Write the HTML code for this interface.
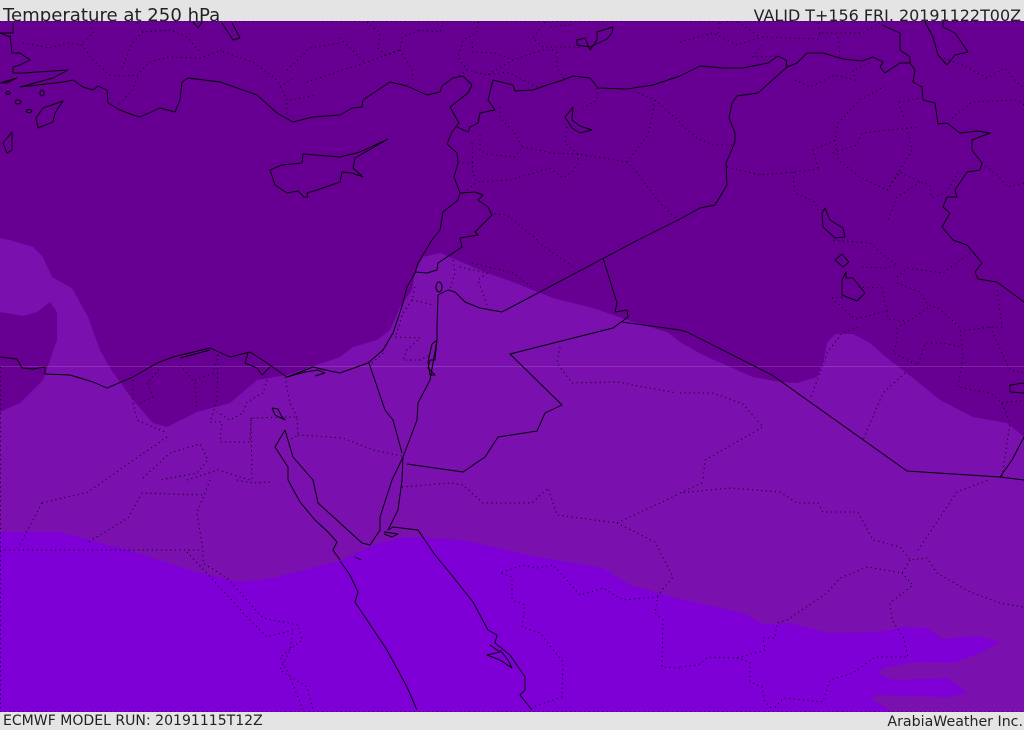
<!DOCTYPE html>
<html><head><meta charset="utf-8"><title>Temperature at 250 hPa</title>
<style>
html,body{margin:0;padding:0;background:#e4e4e4;width:1024px;height:729px;overflow:hidden}
.t{position:absolute;font-family:"DejaVu Sans",sans-serif;color:#222;white-space:nowrap;line-height:1}
svg{position:absolute;left:0;top:21px}
</style></head><body>
<div class="t" style="left:3px;top:7px;font-size:18.1px">Temperature at 250 hPa</div>
<div class="t" style="right:3px;top:8px;font-size:15.95px">VALID T+156 FRI. 20191122T00Z</div>
<div class="t" style="left:3px;top:714px;font-size:14.05px">ECMWF MODEL RUN: 20191115T12Z</div>
<div class="t" style="right:1px;top:715px;font-size:14.2px">ArabiaWeather Inc.</div>
<svg width="1024" height="691" viewBox="0 21 1024 691">
<rect x="0" y="21" width="1024" height="691" fill="#670092"/>
<path fill="#7a10ae" stroke-linejoin="round" d="M0 238L10 240L33 247L43 257L52 277L72 288L88 317L100 350L110 368L133 400L153 423L167 427L197 412L230 403L257 380L287 375L340 357L353 347L377 340L390 330L400 307L412 290L415 273L423 257L440 253L457 260L487 273L513 282L553 298L593 308L633 322L667 332L680 342L703 355L730 367L753 377L780 382L797 383L817 377L823 363L827 343L835 334L853 334L870 343L887 358L913 378L940 400L973 417L1007 423L1024 437L1024 712L0 712Z"/>
<path fill="#670092" d="M0 312L23 316L37 312L50 302L57 312L57 340L43 380L20 403L0 412Z"/>
<path fill="#7f00d6" d="M0 532L60 532L127 550L200 573L240 582L273 578L340 561L373 545L403 537L427 538L463 540L527 555L603 568L630 585L680 599L743 613L763 624L790 623L827 633L880 632L903 627L927 628L943 639L980 636L1000 642L980 653L953 663L917 662L887 667L877 673L893 680L947 678L968 693L947 697L877 695L870 698L893 712L0 712Z"/>
<path d="M0 366.5H1024" stroke="#fff" stroke-opacity=".14" stroke-width="1"/>
<g fill="none" stroke="#000" stroke-width=".95" stroke-linejoin="round">
<path d="M10 35L12 53L20 53L30 60L20 65L13 67L13 73L23 73L68 70L53 78L20 87L55 83L63 82L73 80L83 87L93 90L98 86L107 90L108 103L120 110L133 115L140 117L160 108L175 112L180 100L182 82L188 78L220 82L257 95L277 113L293 122L313 117L340 115L352 108L362 107L363 100L390 82L407 86L427 95L440 92L442 86L453 78L463 76L472 85L468 93L450 107L459 123L452 132L447 144L457 153L458 163L454 177L460 193L458 200L443 212L440 230L432 240L418 263L415 273L407 287L403 303L393 333L383 350L368 363L340 373L330 371L313 367L287 377L267 363L250 352L230 357L210 348L173 357L157 363L133 377L107 388L93 382L70 375L45 374L45 367L33 369L22 368L17 359L0 357"/>
<path d="M248 353L245 363L257 368L262 375L270 367M180 358L195 354L210 350M287 377L305 372L318 370L325 373L315 376"/>
<path d="M13 23L13 33L0 33M0 33L10 37"/>
<path d="M285 430L275 447L288 467L288 480L300 502L315 520L328 532L337 542L333 550L340 560M285 430L293 457L313 480L318 503L340 523L362 543L370 545L380 530L380 517L392 480L403 457M403 457L402 480L398 510L388 530L393 527L418 530L435 555L450 573L473 602L488 630L497 635L495 643L510 655L525 677L525 690L520 695L532 710"/>
<path d="M340 561L350 575L358 592L355 602L387 650L407 687L417 710"/>
<path d="M490 645L500 652L487 655L500 660L512 668L508 660L500 650M384 534L392 537L398 534L384 532M355 557L361 560"/>
<path d="M369 363L385 410L393 420L402 453M403 457L417 420L418 403L430 380L437 340L437 327L438 295"/>
<path d="M432 344L437 340L435 360L430 360L428 368L435 375L430 375L428 362Z"/>
<ellipse cx="439" cy="287" rx="3" ry="5"/>
<path d="M407 464L463 472L485 457L498 437L537 431L545 413L562 405L510 354L613 328L628 317L627 310L615 312L617 303L603 258"/>
<path d="M502 312L638 240L680 219L700 208L715 205L727 185L726 163L735 142L735 133L729 118L732 103L737 96L758 93L787 67"/>
<path d="M502 312L480 308L465 302L455 292L448 290L438 295"/>
<path d="M457 127L468 132L470 127L478 123L480 113L495 110L488 100L493 80L513 85L515 91L533 90L547 85L563 80L573 76L590 78L598 88L627 89L653 85L680 76L700 66L723 68L743 68L768 63L778 56L786 60L787 67L797 63L807 53L823 53L843 59L862 61L873 57L883 62L880 67L885 73L900 63L910 63L910 57L900 50L900 33L882 25"/>
<path d="M910 63L915 70L913 82L922 87L923 100L935 103L938 124L947 123L960 133L977 131L990 133L972 140L972 150L982 163L980 170L967 172L955 190L957 197L947 197L943 207L950 213L942 227L953 240L967 245L982 263L975 272L978 279L997 282L1024 302"/>
<path d="M460 193L475 192L483 195L478 200L488 207L492 215L475 232L478 235L460 238L462 247L438 263L437 270L427 273L415 272"/>
<path d="M622 322L680 330L687 332L772 375L907 471L1000 477L1024 480M1000 477L1012 460L1024 437"/>
<path d="M270 170L282 165L302 163L303 154L340 157L360 152L388 139L355 158L353 168L363 177L352 173L342 172L340 182L317 190L307 193L308 197L304 197L298 191L287 193L275 185Z"/>
<path d="M63 101L43 108L36 118L38 128L53 122L55 113ZM12 132L3 143L7 153L12 150ZM222 23L233 40L240 38L232 23M193 22L198 28L202 22M0 83L17 78L7 83Z"/>
<ellipse cx="8" cy="93" rx="2" ry="1.5"/><ellipse cx="18" cy="102" rx="3" ry="2"/><ellipse cx="29" cy="111" rx="3" ry="1.5"/><ellipse cx="42" cy="93" rx="2" ry="3"/>
<path d="M577 40L585 38L590 50L597 40L597 32L613 27L612 33L607 39L590 47L577 45ZM573 107L565 117L572 128L580 133L592 130L580 126L572 120L573 107Z"/>
<path d="M925 22L933 37L938 55L947 65L955 55L968 52L955 33L943 27L943 22"/>
<path d="M825 208L822 213L823 227L835 238L845 237L843 228L830 220ZM835 260L842 254L849 262L843 267ZM846 272L842 280L842 295L857 301L865 293L853 278L846 278ZM1010 385L1024 383M1010 392L1024 393M1010 385L1010 392"/>
<path d="M272 408L278 409L282 417L285 420L275 415Z"/>
</g>
<g fill="none" stroke="#000" stroke-width="1" stroke-dasharray="1 3.6">
<path d="M0 21H1024M0 712H1024M.5 367V712"/>
<path d="M23 43L50 48L67 43L82 45L93 60L110 75L117 76L138 75L148 63L167 57L200 58L222 50M90 23L93 33L80 45M137 23L143 32L170 30L187 37L200 52M143 32L132 43L122 68M138 77L132 90L117 107M223 52L253 62L277 80L287 100L287 117M287 70L310 48L340 43M280 87L293 78M307 82L340 71L365 63L400 50L402 37L420 30L440 32L443 22M290 100L317 95M367 22L380 33L378 48L385 55L400 50M340 38L365 63M400 50L412 70L413 83"/>
<path d="M478 22L477 33L463 40L458 57L467 70L457 77M467 70L487 75L507 72L537 87M472 42L473 52L495 53L513 60L543 50L557 50M513 60L487 75M545 22L533 38L543 47L580 47M557 52L557 68L565 80M570 25L547 27M597 88L597 100L583 108M638 93L655 100L680 122M655 100L648 135L627 162"/>
<path d="M500 107L500 118L515 133L522 147L515 157L487 154L480 150L480 135M522 147L553 153L578 154L627 162L637 173L660 203L680 222M578 154L578 163L572 172L563 178L550 168L510 180L477 182L467 190M472 143L473 173L477 182M458 163L473 163M567 127L565 143L578 154"/>
<path d="M682 125L697 138L713 145L733 145M727 167L760 175L793 172L820 169M793 172L795 193L815 202L818 210M680 42L713 33L737 45L762 37L818 39L820 33L862 33L880 23M720 23L718 33M738 22L760 37M762 45L753 57L778 56M818 23L820 33M838 37L840 57M795 80L810 87L835 75L855 80L853 70L873 62"/>
<path d="M885 86L860 100L838 123L835 140L813 150L818 168M835 140L838 160L860 177L887 190L900 172L920 182L930 185L932 198L947 192L958 172M833 153L857 145L862 133L907 128L920 127M907 128L912 150L887 190M899 102L920 98M900 107L905 120M952 118L972 102L1017 100L1024 105M982 163L997 175L1008 187L1024 183M920 182L897 197L887 223M940 57L963 65L987 78L1005 68L1015 80L1024 88"/>
<path d="M832 298L847 297M832 298L855 319L887 311L882 288L857 287M887 311L888 319L907 321M862 267L887 268L897 265L883 255L870 243L830 240M897 277L907 268L943 273L970 253M897 283L920 292L928 305L940 309L960 328L963 357L958 387L990 393L1002 403L1010 423L1002 477M928 308L910 320L897 328L897 343L893 353L918 365L925 343L943 343L962 347M960 331L990 327L1002 327L997 290M990 327L1010 370L1024 373M1002 403L1024 400M858 327L842 333L827 353L810 400M905 373L883 393L863 440"/>
<path d="M680 393L713 393L743 404L763 427L705 460L703 480M560 347L557 363L572 383L617 382L677 393"/>
<path d="M702 483L680 493L730 488L780 492L797 503L818 503L823 512L858 512L873 540L900 547L910 560L927 558L937 573L970 592L1000 603L1023 607M918 550L957 492L988 480M910 560L902 573L867 567L840 578L827 593L787 620L777 623L775 638L763 638L765 650L737 658L708 657L698 665L680 667M902 573L913 585L890 603L892 620L903 637L908 657L875 657L853 673L830 680L823 702L783 698L773 710M737 658L750 662L750 682L762 687L765 702L773 710"/>
<path d="M402 487L450 483L463 485L483 503L532 503L548 488L557 515L617 523L677 495M617 523L655 542L673 577L658 595L655 613L663 620L662 667L680 668M658 597L623 600L603 588L580 595L553 565L537 568L523 565L500 573L512 577L512 600L525 605L522 627L540 633L563 662L562 697L532 707"/>
<path d="M0 550L202 550M202 495L142 493L128 518L87 543M42 503L18 548M42 503L88 492L105 480L167 437M143 478L170 453L200 444L208 460L197 473L160 480M187 480L218 470L250 480M210 480L197 513L203 550L203 563L227 578L263 618L298 625L302 640L280 657L290 677L303 710M187 552L213 580L250 620L267 637L293 630L290 650L280 670L307 687L313 710M237 480L253 483L270 482"/>
<path d="M133 380L133 403L137 420L167 433M153 397L147 383L160 368M140 403L153 397M180 365L195 383L197 410M195 380L213 373L218 353L217 400L210 422L222 422L220 442L250 442L251 418L297 417L298 435L290 440M247 402L243 413L230 420L217 412M251 418L252 480M263 393L247 402M267 380L263 393M285 377L290 403L297 417M298 435L343 438L373 450L402 456"/>
<path d="M415 287L412 300L403 313L395 337L420 338L407 350L403 360L420 360L430 355M383 353L370 365M412 300L433 305M453 260L455 273L450 290M460 267L487 273L478 280L487 305M472 263L513 273L533 288M538 242L573 267M490 213L507 215L537 240"/>
</g>
</svg>
</body></html>
